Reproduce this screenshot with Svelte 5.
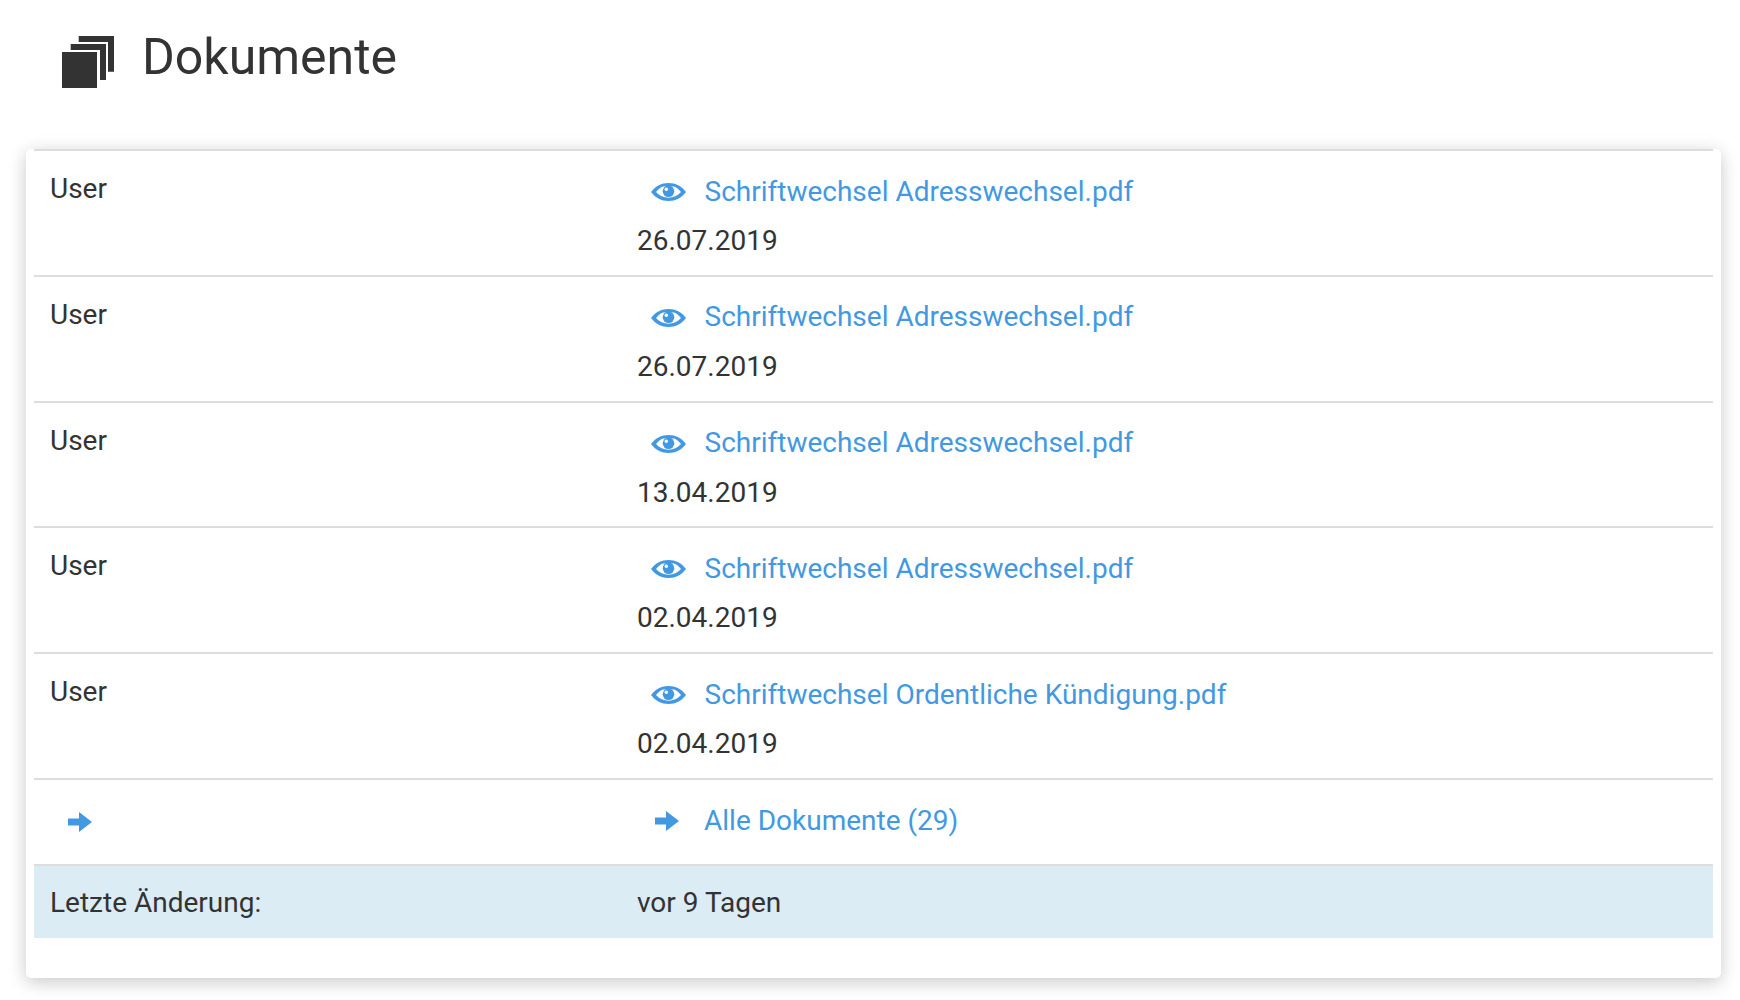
<script>
  const docs = [
    { name: 'Schriftwechsel Adresswechsel.pdf', date: '26.07.2019' },
    { name: 'Schriftwechsel Adresswechsel.pdf', date: '26.07.2019' },
    { name: 'Schriftwechsel Adresswechsel.pdf', date: '13.04.2019' },
    { name: 'Schriftwechsel Adresswechsel.pdf', date: '02.04.2019' },
    { name: 'Schriftwechsel Ordentliche Kündigung.pdf', date: '02.04.2019' }
  ];
</script>

<div class="page">
  <header class="head">
    <svg class="stack" viewBox="0 0 52 52" aria-hidden="true">
      <rect x="0" y="16" width="35" height="36" />
      <path d="M8.700 8H44V44H38V14H8.700Z" />
      <path d="M16.700 0H52V35.700H46V6H16.700Z" />
    </svg>
    <h1>Dokumente</h1>
  </header>

  <section class="card">
    {#each docs as doc}
      <div class="row">
        <div class="who">User</div>
        <div class="doc">
          <a class="link" href="#doc">
            <svg class="eye" viewBox="0 0 35 18" aria-hidden="true">
              <path d="M0 9C4.500 3 10.500 0 17.500 0S30.500 3 35 9C30.500 15 24.500 18 17.500 18S4.500 15 0 9Z" />
              <path class="lid" d="M5 9C7.500 6 9.500 4.500 12 3.500H23C25.500 4.500 27.500 6 30 9C26.500 12.600 22.500 14.700 17.500 14.700S8.500 12.600 5 9Z" />
              <circle cx="17.500" cy="8.300" r="5.800" />
              <circle class="lid" cx="15.300" cy="6.300" r="1.700" />
            </svg>
            <span>{doc.name}</span>
          </a>
          <div class="date">{doc.date}</div>
        </div>
      </div>
    {/each}

    <div class="row more">
      <div class="who">
        <svg class="arrow" viewBox="0 0 24 20" aria-hidden="true"><path d="M0 6.500H11V0L24 10L11 20V13.500H0Z" /></svg>
      </div>
      <div class="doc">
        <a class="link" href="#all">
          <svg class="arrow" viewBox="0 0 24 20" aria-hidden="true"><path d="M0 6.500H11V0L24 10L11 20V13.500H0Z" /></svg>
          <span>Alle Dokumente (29)</span>
        </a>
      </div>
    </div>

    <div class="row info">
      <div class="who">Letzte Änderung:</div>
      <div class="doc">vor 9 Tagen</div>
    </div>
  </section>
</div>

<style>
  :global(body) {
    margin: 0;
    background: #fff;
    font-family: Roboto, "Liberation Sans", sans-serif;
    color: #333;
  }
  .page {
    padding: 0 19px 21px 26px;
  }
  .head {
    display: flex;
    align-items: flex-start;
    height: 149px;
    box-sizing: border-box;
    padding: 27px 0 0 36px;
  }
  .stack {
    width: 52px;
    height: 52px;
    margin-top: 9px;
    fill: #333;
  }
  h1 {
    margin: 0 0 0 28px;
    font-size: 50px;
    font-weight: 400;
    line-height: 60px;
  }
  .card {
    height: 829px;
    box-sizing: border-box;
    padding: 0 8px;
    background: #fff;
    border-radius: 5px;
    box-shadow: 0 4px 18px rgba(0, 0, 0, 0.22);
    font-size: 28px;
  }
  .row {
    display: grid;
    grid-template-columns: 587px 1fr;
    border-top: 2px solid #ddd;
    height: 123.8px;
  }
  .who {
    padding: 17px 16px 0;
    line-height: 42px;
  }
  .doc {
    padding-left: 16px;
    padding-top: 16px;
  }
  .link {
    display: flex;
    align-items: center;
    height: 48px;
    color: #4299e1;
    text-decoration: none;
  }
  .eye {
    width: 35px;
    height: 18px;
    margin: 2px 18.500px 0 14px;
    fill: #4299e1;
  }
  .lid {
    fill: #fff;
  }
  .date {
    line-height: 49px;
    padding-top: 1px;
  }
  .more {
    height: 84px;
  }
  .more .who {
    padding-top: 18px;
  }
  .more .doc {
    padding-top: 17px;
  }
  .more .who .arrow {
    margin: 14px 0 0 18px;
    display: block;
  }
  .arrow {
    width: 24px;
    height: 20px;
    fill: #4299e1;
  }
  .more .link .arrow {
    margin: 0 25px 0 18px;
  }
  .info {
    height: 72px;
    background: #dcecf5;
    align-items: center;
  }
  .info .who,
  .info .doc {
    padding-top: 3px;
    line-height: 42px;
  }
</style>
